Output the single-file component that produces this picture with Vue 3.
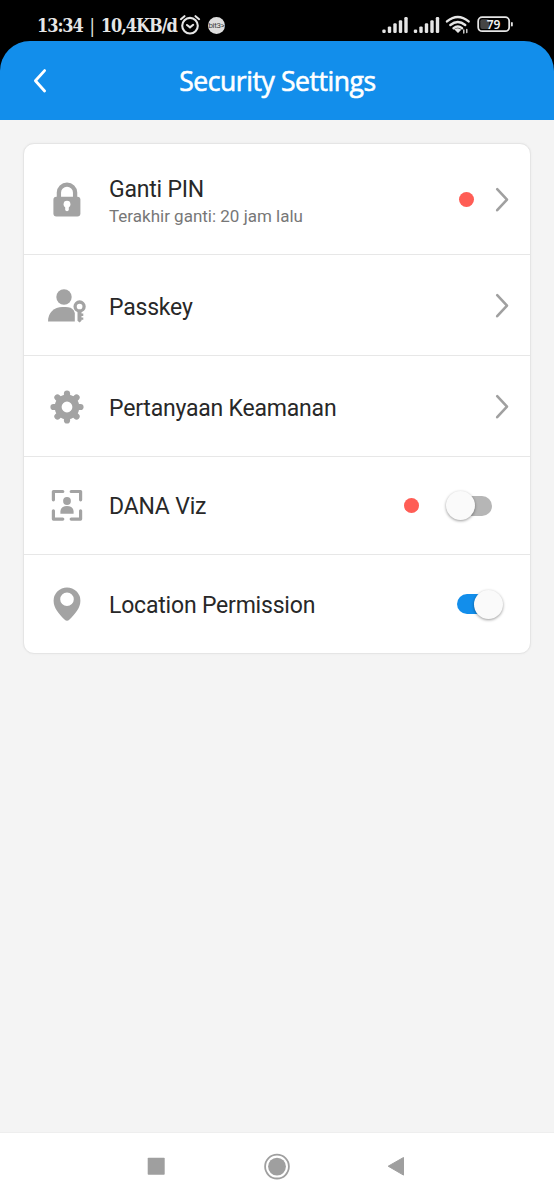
<script setup>
import { ref } from 'vue'

const rows = ref([
  { id: 'lock', label: 'Ganti PIN', note: 'Terakhir ganti: 20 jam lalu', dot: true, end: 'arrow' },
  { id: 'passkey', label: 'Passkey', end: 'arrow' },
  { id: 'gear', label: 'Pertanyaan Keamanan', end: 'arrow' },
  { id: 'face', label: 'DANA Viz', dot: true, end: 'switch', on: false },
  { id: 'place', label: 'Location Permission', end: 'switch', on: true },
])
const teeth = [0, 45, 90, 135, 180, 225, 270, 315]
const bars = [0, 1, 2, 3, 4]
</script>

<template>
  <div class="screen">
    <div class="status">
      <span class="clock">13:34 <span class="pipe">|</span> 10,4KB/d</span>
      <svg class="alarm" width="22" height="22" viewBox="0 0 22 22" fill="none" stroke="#e6e6e6" stroke-width="2.1" stroke-linecap="round">
        <circle cx="11" cy="11.7" r="7.8" />
        <path d="M1.900 5.200 5.500 2.200M20.100 5.200 16.500 2.200M8 11l3 2.400 3.200-2.600" />
      </svg>
      <span class="badge">bit3&gt;</span>
      <svg class="signals" width="131" height="22" viewBox="0 0 131 22">
        <g fill="#e6e6e6">
          <template v-for="s in [0, 31.5]" :key="s">
            <rect v-for="b in bars" :key="b" :x="0.3 + s + b * 5.5" :y="15.5 - b * 3.1" width="3.4" :height="3.5 + b * 3.1" rx="1.2" />
          </template>
          <path d="m72.200 15.200 3.800 3.800 3.300-3.300q-3.400-2.400-7.100-.5z" />
        </g>
        <g fill="none" stroke="#e6e6e6" stroke-width="2.4" stroke-linecap="round">
          <path d="M65 7.400q10.800-9 21.600 0M68.400 11q7.400-6 14.800 0M71.600 14.200q4.200-3.200 8.400 0" />
          <path d="M81.800 16v3M84.800 15.500v3" stroke-width="1.3" />
        </g>
        <rect x="96.2" y="3.200" width="31" height="14" rx="4" fill="#000" stroke="#e6e6e6" stroke-width="1.8" />
        <rect x="98.3" y="5.300" width="9" height="9.800" rx="2" fill="#454545" />
        <rect x="129" y="8" width="1.8" height="4.500" rx=".9" fill="#e6e6e6" />
        <text x="111.5" y="14.600" text-anchor="middle" class="level">79</text>
      </svg>
    </div>

    <header class="header">
      <svg class="back" width="14" height="26" viewBox="0 0 14 26" fill="none" stroke="#fff" stroke-width="2.8" stroke-linecap="round" stroke-linejoin="round">
        <path d="M11.600 2.600 2.400 12.800l9.200 10.200" />
      </svg>
      <h1 class="title">Security Settings</h1>
    </header>

    <main class="body">
      <div class="card">
        <div v-for="row in rows" :key="row.id" class="row" :class="row.id">
          <svg class="icon" width="40" height="36" viewBox="0 0 40 36" fill="#a3a3a3">
            <template v-if="row.id === 'lock'">
              <path d="M11.900 17V10.500a8 7.800 0 0 1 16.200 0v6.500" fill="none" stroke="#a3a3a3" stroke-width="4.300" />
              <rect x="6.400" y="14.800" width="27" height="19.600" rx="3" />
              <circle cx="20" cy="22.200" r="3.400" fill="#fff" />
              <path d="M18.200 23h3.600v4.500a1.800 1.800 0 0 1-3.600 0z" fill="#fff" />
            </template>
            <template v-else-if="row.id === 'passkey'">
              <circle cx="17" cy="9" r="7.700" />
              <path d="M1 33.500C1 24.500 7 19 15.500 19h3c4 0 6.700 1 8.300 3.500l1 2.500v8.500z" />
              <circle cx="32.600" cy="18.500" r="4.500" fill="none" stroke="#a3a3a3" stroke-width="3.300" />
              <path d="M30.500 23.500h4v2h1.800v2.400h-1.800v1.600h1.800v2.300h-1.800v1l-1.900 1.700-2.100-1.700z" />
            </template>
            <template v-else-if="row.id === 'gear'">
              <g stroke="#a3a3a3" stroke-width="6.200" stroke-linecap="round" fill="none">
                <path v-for="a in teeth" :key="a" d="M20 9V4.500" :transform="`rotate(${a} 20 18)`" />
              </g>
              <circle cx="20" cy="18" r="8.900" fill="none" stroke="#a3a3a3" stroke-width="7" />
            </template>
            <template v-else-if="row.id === 'face'">
              <path d="M6.400 11.800V3.500h9.400M24.200 3.500h9.400v8.300M33.600 22.800v8.300h-9.400M15.800 31.100H6.400v-8.300" fill="none" stroke="#a3a3a3" stroke-width="3.200" stroke-linecap="round" stroke-linejoin="round" />
              <circle cx="20" cy="13" r="3.900" />
              <path d="M13.400 25.800v-2c0-3.800 2.600-5.800 6.600-5.800s6.600 2 6.600 5.800v2z" />
            </template>
            <template v-else>
              <path fill-rule="evenodd" d="M20 1.400A13.400 13.400 0 0 0 6.600 14.700C6.600 22 12 28 17.500 33.500Q20 36 22.500 33.500C28 28 33.400 22 33.400 14.700A13.400 13.400 0 0 0 20 1.400zM20 6.400a6.800 6.800 0 1 1 0 13.600 6.800 6.800 0 0 1 0-13.600z" />
            </template>
          </svg>
          <div class="copy">
            <span class="label">{{ row.label }}</span>
            <span v-if="row.note" class="note">{{ row.note }}</span>
          </div>
          <i v-if="row.dot" class="dot"></i>
          <svg v-if="row.end === 'arrow'" class="arrow" width="14" height="26" viewBox="0 0 14 26" fill="none" stroke="#a0a0a0" stroke-width="2.600" stroke-linecap="round" stroke-linejoin="round">
            <path d="M2.200 2.200 12 12.700 2.200 23.200" />
          </svg>
          <span v-else class="switch" :class="{ on: row.on }"><i class="knob"></i></span>
        </div>
      </div>
    </main>

    <nav class="nav">
      <svg width="18" height="28" viewBox="0 0 18 28"><rect x=".7" y="5.800" width="17" height="17" rx=".8" fill="#9f9f9f" /></svg>
      <svg width="28" height="28" viewBox="0 0 28 28"><circle cx="15" cy="14.600" r="11.900" fill="none" stroke="#9f9f9f" stroke-width="1.800" /><circle cx="15" cy="14.600" r="8.900" fill="#9f9f9f" /></svg>
      <svg width="18" height="28" viewBox="0 0 18 28"><path d="M1.200 14.200 16.500 5.500v17.600z" fill="#9f9f9f" stroke="#9f9f9f" stroke-linejoin="round" /></svg>
    </nav>
  </div>
</template>

<style>
body { margin: 0; background: #000; }
</style>

<style scoped>
.screen { display: flex; flex-direction: column; width: 554px; height: 1200px; overflow: hidden; background: #000; font-family: Roboto, "Liberation Sans", sans-serif; }
.status { display: flex; align-items: center; height: 41px; box-sizing: border-box; padding: 9px 0 0 37px; }
.clock { width: 138px; flex: none; white-space: pre; color: #e6e6e6; font: bold 18px "DejaVu Serif Condensed", "DejaVu Serif", serif; font-stretch: condensed; letter-spacing: -1.05px; word-spacing: 2.2px; }
.pipe { font-weight: normal; }
.alarm { margin-left: 4px; }
.badge { width: 17px; height: 17px; margin-left: 7px; border-radius: 50%; background: #dedede; color: #444; font: 8px/17px Roboto, sans-serif; letter-spacing: -0.3px; text-align: center; white-space: nowrap; }
.signals { margin-left: 157px; }
.level { fill: #f2f2f2; font: 600 12px "Noto Sans", sans-serif; }
.header { display: flex; align-items: center; height: 79px; border-radius: 30px 30px 0 0; background: #128eeb; }
.back { margin-left: 33px; width: 14px; }
.title { flex: 1; margin: 0 46px 0 0; color: #fff; text-align: center; font: 500 26.5px/40px "Open Sans", "Noto Sans", sans-serif; letter-spacing: -0.42px; -webkit-text-stroke: 0.6px #fff; }
.body { flex: 1; box-sizing: border-box; padding: 23px 23px 0; background: #f4f4f4; }
.card { box-sizing: border-box; height: 511px; overflow: hidden; border: 1px solid #e5e5e5; border-radius: 11px; background: #fff; box-shadow: 0 0 2px #e8e8e8; }
.row { display: flex; align-items: center; box-sizing: border-box; height: 101px; padding: 2px 21px 0 23px; border-bottom: 1px solid #e7e7e7; }
.lock { height: 111px; padding-top: 1px; }
.face { height: 98px; padding-top: 0; }
.place { height: 98px; padding-top: 0; border: 0; }
.copy { display: flex; flex: 1; flex-direction: column; margin-left: 22px; padding-top: 3px; }
.lock .copy { padding-top: 4px; }
.face .copy { padding-top: 2px; }
.label { color: #282828; font-size: 23px; line-height: 28px; letter-spacing: -0.2px; }
.note { color: #777; font-size: 17px; line-height: 24px; }
.dot { flex: none; width: 15px; height: 15px; margin-right: 21px; border-radius: 50%; background: #ff5d55; }
.face .dot { margin-right: 38px; }
.switch { display: flex; align-items: center; flex: none; width: 35px; height: 20px; margin-right: 17px; border-radius: 10px; background: #b6b6b6; }
.knob { flex: none; width: 29px; height: 29px; margin-left: -11px; border-radius: 50%; background: #fafafa; box-shadow: 0 1px 3px #0006; }
.on { background: #128eeb; }
.on .knob { margin-left: 17px; }
.nav { display: flex; align-items: flex-start; justify-content: space-between; box-sizing: border-box; height: 68px; padding: 19px 149px 0 147px; border-top: 1px solid #eee; background: #fff; }
</style>
